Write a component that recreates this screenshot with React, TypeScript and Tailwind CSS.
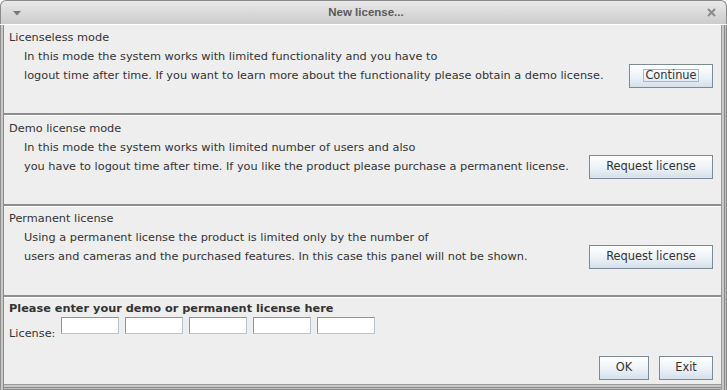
import React from "react";

function Btn({ children, w, focus }: { children: React.ReactNode; w: string; focus?: boolean }) {
  return (
    <button
      className={`${w} h-[24px] shrink-0 flex items-center justify-center border border-[#7a8a99] bg-gradient-to-b from-[#ffffff] via-[#eef3f8] to-[#d5e0eb] text-[#333333] text-[11.4px] leading-none`}
    >
      {focus ? (
        <span className="border border-[#a3b8cc] px-[1px] h-[13px] flex items-center">{children}</span>
      ) : (
        children
      )}
    </button>
  );
}

function Section({
  title,
  line1,
  line2,
  button,
  pt,
}: {
  title: string;
  line1: string;
  line2: string;
  button: React.ReactNode;
  pt: string;
}) {
  return (
    <div className={`h-[88px] flex flex-col ${pt} pl-[5px] pr-[8px]`}>
      <div className="h-[19px] leading-[19px]">{title}</div>
      <div className="h-[19px] leading-[19px] pl-[15px]">{line1}</div>
      <div className="h-[19px] flex items-center justify-between">
        <div className="leading-[19px] pl-[15px] whitespace-nowrap">{line2}</div>
        {button}
      </div>
    </div>
  );
}

function Sep() {
  return <div className="h-[3px] shrink-0 border-t-2 border-[#8e8e8e] border-b border-b-white" />;
}

export default function App() {
  return (
    <div className="w-[727px] h-[390px] flex flex-col bg-white font-['DejaVu_Sans',sans-serif] text-[11.3px] text-[#333333] overflow-hidden">
      <div className="h-[24px] shrink-0 rounded-t-[6px] border border-b-0 border-[#8a8a8a] bg-gradient-to-b from-[#e9e9e9] to-[#cbcbcb] flex items-center justify-between pl-[12px] pr-[10px]">
        <svg width="8" height="5" viewBox="0 0 8 5" className="mt-[2px]">
          <polygon points="0,0 8,0 4,4.5" fill="#777777" />
        </svg>
        <div className="font-bold text-[#5a5a5a] text-[11.5px] font-['Liberation_Sans',sans-serif] ml-[4px]">New license...</div>
        <svg width="9" height="9" viewBox="0 0 9 9">
          <path d="M1 1 L8 8 M8 1 L1 8" stroke="#8a8a8a" strokeWidth="2" />
        </svg>
      </div>
      <div className="h-[1px] shrink-0 bg-white" />
      <div className="flex-1 flex flex-col bg-[#eeeeee] pl-[4px] pr-[6px] pb-[6px] shadow-[inset_1px_0_#8e8e8e,inset_3px_0_#c9c9c9,inset_4px_0_#8a8a8a,inset_-1px_0_#8a8a8a,inset_-2px_0_#bdbdbd,inset_-3px_0_#8a8a8a,inset_-5px_0_#c8c8c8,inset_-6px_0_#9a9a9a,inset_0_-1px_#8a8a8a,inset_0_-2px_#bdbdbd,inset_0_-3px_#8a8a8a,inset_0_-5px_#c8c8c8,inset_0_-6px_#9a9a9a]">
        <Section
          pt="pt-[3px]"
          title="Licenseless mode"
          line1="In this mode the system works with limited functionality and you have to"
          line2="logout time after time. If you want to learn more about the functionality please obtain a demo license."
          button={<Btn w="w-[84px]" focus>Continue</Btn>}
        />
        <Sep />
        <Section
          pt="pt-[3px]"
          title="Demo license mode"
          line1="In this mode the system works with limited number of users and also"
          line2="you have to logout time after time. If you like the product please purchase a permanent license."
          button={<Btn w="w-[124px]">Request license</Btn>}
        />
        <Sep />
        <Section
          pt="pt-[2px]"
          title="Permanent license"
          line1="Using a permanent license the product is limited only by the number of"
          line2="users and cameras and the purchased features. In this case this panel will not be shown."
          button={<Btn w="w-[124px]">Request license</Btn>}
        />
        <Sep />
        <div className="flex-1 flex flex-col pt-[1px] pl-[5px] pr-[8px] pb-[4px]">
          <div className="h-[19px] leading-[19px] font-bold">Please enter your demo or permanent license here</div>
          <div className="flex items-start mt-[-1px] gap-[6px]">
            <div className="mt-[7px] leading-[19px]">License:</div>
            {[0, 1, 2, 3, 4].map((i) => (
              <div
                key={i}
                className="w-[58px] h-[17px] bg-white border border-[#8a98a6] border-b-[#b8c4cf] border-r-[#b8c4cf]"
              />
            ))}
          </div>
          <div className="mt-auto flex justify-end gap-[10px]">
            <Btn w="w-[50px]">OK</Btn>
            <Btn w="w-[54px]">Exit</Btn>
          </div>
        </div>
      </div>
    </div>
  );
}
